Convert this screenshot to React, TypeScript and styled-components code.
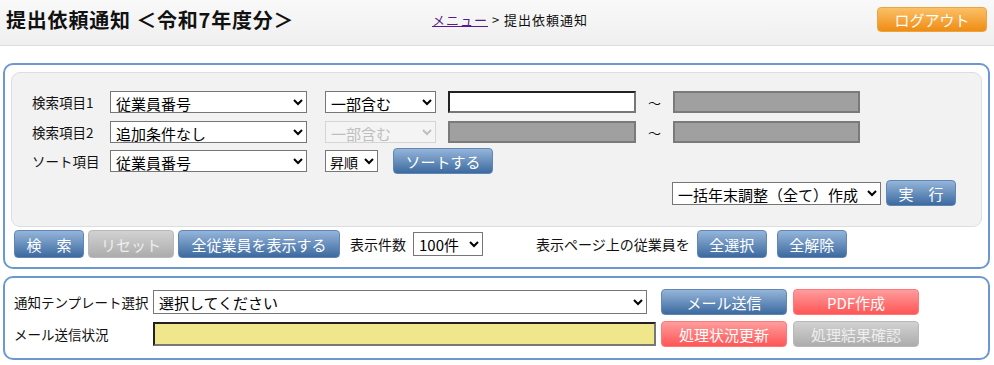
import styled, { createGlobalStyle } from "styled-components";

const GlobalStyle = createGlobalStyle`
  html, body {
    margin: 0;
    padding: 0;
    background: #fff;
    font-family: "Noto Sans CJK JP", "Liberation Sans", sans-serif;
    color: #111;
  }
`;

const Header = styled.header`
  display: flex;
  align-items: center;
  height: 46px;
  box-sizing: border-box;
  padding: 0 7px 6px 6px;
  background: linear-gradient(#f9f9f9, #efefef);
  border-bottom: 1px solid #dcdcdc;
`;

const Title = styled.h1`
  width: 426px;
  margin: 0;
  font-size: 20px;
  font-weight: bold;
  letter-spacing: 0.8px;
  white-space: nowrap;
`;

const Crumbs = styled.div`
  font-size: 13px;
  letter-spacing: 1px;
  a {
    color: #551a8b;
    text-decoration: underline;
  }
`;

const Btn = styled.button<{ $tone?: "blue" | "gray" | "red" | "orange"; $w: number; $h?: number }>`
  width: ${(p) => p.$w}px;
  height: ${(p) => p.$h ?? 28}px;
  padding: 0;
  border-radius: 4px;
  font-family: inherit;
  font-size: 15px;
  line-height: 1;
  white-space: nowrap;
  cursor: pointer;
  color: ${(p) => (p.$tone === "gray" ? "#eeeeee" : "#fff")};
  border: 1px solid
    ${(p) =>
      p.$tone === "gray"
        ? "#b8b8b8"
        : p.$tone === "red"
        ? "#f77"
        : p.$tone === "orange"
        ? "#e9a640"
        : "#5f86b5"};
  background: ${(p) =>
    p.$tone === "gray"
      ? "linear-gradient(#d2d2d2, #acacac)"
      : p.$tone === "red"
      ? "linear-gradient(#ff9c9c, #ff5656)"
      : p.$tone === "orange"
      ? "linear-gradient(#fbc067, #f08c14)"
      : "linear-gradient(#95b5da, #3c6a9f)"};
`;

const Panel = styled.section<{ $mt: number }>`
  margin: ${(p) => p.$mt}px 4px 0 3px;
  border: 2px solid #6c98d2;
  border-radius: 10px;
`;

const SearchBox = styled.div`
  margin: 7px 6px 0 6px;
  padding: 18px 25px 20px 20px;
  background: #f2f2f2;
  border: 1px solid #dedede;
  border-radius: 9px;
  display: flex;
  flex-direction: column;
  gap: 5px;
`;

const Row = styled.div<{ $end?: boolean; $mt?: number }>`
  display: flex;
  align-items: center;
  margin-top: ${(p) => p.$mt ?? 0}px;
  justify-content: ${(p) => (p.$end ? "flex-end" : "flex-start")};
`;

const Label = styled.span<{ $w?: number }>`
  width: ${(p) => p.$w ?? 78}px;
  flex: none;
  font-size: 13.5px;
  white-space: nowrap;
`;

const Select = styled.select<{ $w: number; $ml?: number; $h?: number; $fs?: number }>`
  width: ${(p) => p.$w}px;
  height: ${(p) => p.$h ?? 22}px;
  margin-left: ${(p) => p.$ml ?? 0}px;
  flex: none;
  box-sizing: border-box;
  border: 1px solid #767676;
  border-radius: 0;
  background: #fff;
  font-family: inherit;
  font-size: ${(p) => p.$fs ?? 15}px;
  color: #000;
  padding: 0 1px;
  &:disabled {
    color: #aaa;
    border-color: #c9c9c9;
    background: #f5f5f5;
  }
`;

const TextBox = styled.input<{ $w: number; $ml?: number; $bg?: string; $h?: number }>`
  width: ${(p) => p.$w}px;
  height: ${(p) => p.$h ?? 22}px;
  margin-left: ${(p) => p.$ml ?? 0}px;
  flex: none;
  box-sizing: border-box;
  border: 2px solid;
  border-color: #222 #777 #777 #222;
  background: ${(p) => p.$bg ?? "#fff"};
  &:disabled {
    background: #a0a0a0;
    border-color: #7a7a7a;
  }
`;

const Tilde = styled.span`
  width: 37px;
  flex: none;
  text-align: center;
  font-size: 13px;
`;

const Toolbar = styled.div`
  display: flex;
  align-items: center;
  gap: 4px;
  padding: 3px 8px 9px 9px;
`;

const Note = styled.span<{ $ml: number }>`
  margin-left: ${(p) => p.$ml}px;
  margin-right: 3px;
  font-size: 14px;
  white-space: nowrap;
`;

const NoticeGrid = styled.div`
  display: grid;
  grid-template-columns: 139px 508px 132px 126px;
  align-items: center;
  row-gap: 6px;
  padding: 11px 0 11px 9px;
`;

const ButtonCell = styled.div`
  display: flex;
  justify-content: flex-start;
`;

export default function App() {
  return (
    <>
      <GlobalStyle />
      <Header>
        <Title>提出依頼通知 ＜令和7年度分＞</Title>
        <Crumbs>
          <a href="#">メニュー</a> &gt; 提出依頼通知
        </Crumbs>
        <Btn $tone="orange" $w={110} $h={25} style={{ marginLeft: "auto" }}>
          ログアウト
        </Btn>
      </Header>

      <Panel $mt={17}>
        <SearchBox>
          <Row>
            <Label>検索項目1</Label>
            <Select $w={197}>
              <option>従業員番号</option>
            </Select>
            <Select $w={111} $ml={18}>
              <option>一部含む</option>
            </Select>
            <TextBox $w={188} $ml={12} />
            <Tilde>～</Tilde>
            <TextBox $w={187} disabled />
          </Row>
          <Row $mt={3}>
            <Label>検索項目2</Label>
            <Select $w={197}>
              <option>追加条件なし</option>
            </Select>
            <Select $w={111} $ml={18} disabled>
              <option>一部含む</option>
            </Select>
            <TextBox $w={188} $ml={12} disabled />
            <Tilde>～</Tilde>
            <TextBox $w={187} disabled />
          </Row>
          <Row>
            <Label>ソート項目</Label>
            <Select $w={197}>
              <option>従業員番号</option>
            </Select>
            <Select $w={53} $ml={18} $fs={14} style={{ padding: 0 }}>
              <option>昇順</option>
            </Select>
            <Btn $w={100} $h={26} style={{ marginLeft: 15 }}>
              ソートする
            </Btn>
          </Row>
          <Row $end $mt={1}>
            <Select $w={209} $h={23}>
              <option>一括年末調整（全て）作成</option>
            </Select>
            <Btn $w={70} $h={26} style={{ marginLeft: 5 }}>
              実　行
            </Btn>
          </Row>
        </SearchBox>
        <Toolbar>
          <Btn $w={70}>検　索</Btn>
          <Btn $tone="gray" $w={86}>リセット</Btn>
          <Btn $w={162}>全従業員を表示する</Btn>
          <Note $ml={6}>表示件数</Note>
          <Select $w={70} $h={24}>
            <option>100件</option>
          </Select>
          <Note $ml={49}>表示ページ上の従業員を</Note>
          <Btn $w={70}>全選択</Btn>
          <Btn $w={70} style={{ marginLeft: 6 }}>全解除</Btn>
        </Toolbar>
      </Panel>

      <Panel $mt={7}>
        <NoticeGrid>
          <Label $w={139}>通知テンプレート選択</Label>
          <Select $w={494} $h={24}>
            <option>選択してください</option>
          </Select>
          <ButtonCell>
            <Btn $w={126} $h={26}>メール送信</Btn>
          </ButtonCell>
          <ButtonCell>
            <Btn $tone="red" $w={126} $h={26}>PDF作成</Btn>
          </ButtonCell>
          <Label $w={139}>メール送信状況</Label>
          <TextBox $w={503} $h={24} $bg="#f0e68c" />
          <ButtonCell>
            <Btn $tone="red" $w={126} $h={26}>処理状況更新</Btn>
          </ButtonCell>
          <ButtonCell>
            <Btn $tone="gray" $w={126} $h={26}>処理結果確認</Btn>
          </ButtonCell>
        </NoticeGrid>
      </Panel>
    </>
  );
}
